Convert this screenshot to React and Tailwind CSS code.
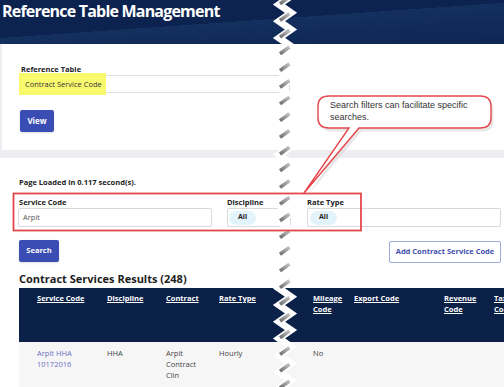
import React from 'react';

const P = 16.7;
const teeth = Array.from({ length: 26 }, (_, i) => 0.3 + (i - 1) * P);

function Tear() {
  const pts = [];
  teeth.forEach((c) => {
    pts.push(`291,${(c - 4.2).toFixed(1)}`);
    pts.push(`279,${(c + 4.2).toFixed(1)}`);
  });
  return (
    <>
      <polyline points={pts.join(' ')} fill="none" stroke="#ffffff" strokeWidth="7" strokeLinejoin="miter" />
      {teeth.map((c, i) => (
        <line key={i} x1="280" y1={c + 3.4} x2="289.5" y2={c - 3.4} stroke="url(#dash)" strokeWidth="3.6" />
      ))}
    </>
  );
}

export default function App() {
  return (
    <div className="relative w-[504px] h-[387px] overflow-hidden bg-white font-['Open_Sans',sans-serif] text-[#222]">
      {/* Header */}
      <header className="h-[44px] bg-[linear-gradient(176deg,#0c2350_48%,#14305e_48%,#0d2552_100%)] pl-[2px]">
        <h1 className="text-[16px] font-bold tracking-[-0.8px] text-white leading-[22px]">Reference Table Management</h1>
      </header>

      {/* Reference table card */}
      <div className="bg-[#eeeef2] pl-[2px] pb-[8px]">
        <div className="h-[106px] bg-white pl-[18px] pt-[20px]">
          <p className="pl-[1px] text-[7.5px] font-bold leading-[10px]">Reference Table</p>
          <div className="relative mt-[1px] h-[18px] w-[270px] rounded-[2px] border border-[#dddddd]">
            <div className="absolute -left-[2px] -top-[3px] h-[22px] w-[87px] bg-[#f8f85e]/90"></div>
            <span className="relative block pl-[4px] text-[7.5px] leading-[16px] text-[#333]">Contract Service Code</span>
          </div>
          <button className="mt-[17px] h-[22px] w-[34px] rounded-[2px] bg-[#3a4db5] text-[8px] font-bold text-white shadow-sm">
            View
          </button>
        </div>
      </div>

      {/* Search section */}
      <section className="pl-[18px] pt-[19px]">
        <p className="pl-[1px] text-[7.5px] font-bold leading-[10px]">Page Loaded in 0.117 second(s).</p>

        <div className="mt-[10px] flex items-start">
          <div className="w-[194px]">
            <p className="pl-[1px] text-[7.5px] font-bold leading-[10px]">Service Code</p>
            <div className="mt-[1px] h-[19px] rounded-[2px] border border-[#d9d9d9] pl-[4px] text-[7.5px] leading-[17px] text-[#555]">
              Arpit
            </div>
          </div>
          <div className="ml-[15px] w-[64px]">
            <p className="text-[7.5px] font-bold leading-[10px]">Discipline</p>
            <div className="mt-[1px] flex h-[19px] items-center rounded-[2px] border border-[#d9d9d9] pl-[1px]">
              <span className="flex h-[14px] w-[27px] items-center justify-center rounded-full bg-[#e2f3fb] text-[7px] font-bold">All</span>
            </div>
          </div>
          <div className="ml-[16px] w-[194px]">
            <p className="text-[7.5px] font-bold leading-[10px]">Rate Type</p>
            <div className="mt-[1px] flex h-[19px] items-center rounded-[2px] border border-[#d9d9d9] pl-[2px]">
              <span className="flex h-[14px] w-[27px] items-center justify-center rounded-full bg-[#e2f3fb] text-[7px] font-bold">All</span>
            </div>
          </div>
        </div>

        <div className="mt-[13px] flex w-[483px] items-start justify-between">
          <button className="ml-[1px] h-[22px] w-[40px] rounded-[2px] bg-[#3a4db5] text-[7.5px] font-bold text-white shadow-sm">
            Search
          </button>
          <button className="mt-[1px] h-[22px] w-[112px] rounded-[2px] border border-[#9ea7da] bg-white text-[7.5px] font-bold text-[#3f4fae]">
            Add Contract Service Code
          </button>
        </div>

        <h2 className="mt-[8px] pl-[1px] text-[11px] font-bold leading-[15px] text-[#1d1d1d]">Contract Services Results (248)</h2>
      </section>

      {/* Table */}
      <div className="ml-[19px] mt-[2px] w-[560px]">
        <div className="grid h-[54px] grid-cols-[70px_59px_53px_59px_35px_41px_90px_50px_60px] bg-[#0b2147] pl-[18px] pt-[5px] text-[7.5px] font-bold leading-[11px] text-white">
          <span className="underline">Service Code</span>
          <span className="underline">Discipline</span>
          <span className="underline">Contract</span>
          <span className="underline">Rate Type</span>
          <span></span>
          <span className="underline">Mileage<br />Code</span>
          <span className="underline">Export Code</span>
          <span className="underline">Revenue<br />Code</span>
          <span className="underline">Tax<br />Code</span>
        </div>
        <div className="grid h-[50px] grid-cols-[70px_59px_53px_59px_35px_41px_90px_50px_60px] bg-[#f6f6f6] pl-[18px] pt-[6px] text-[7.5px] leading-[11px] text-[#444]">
          <span className="text-[#6b6fc4]">Arpit HHA<br />10172016</span>
          <span>HHA</span>
          <span>Arpit<br />Contract<br />Clin</span>
          <span>Hourly</span>
          <span></span>
          <span>No</span>
          <span></span>
          <span></span>
          <span></span>
        </div>
      </div>

      {/* Annotations: torn edge, highlight box, callout */}
      <svg className="pointer-events-none absolute left-0 top-0" width="504" height="387">
        <defs>
          <linearGradient id="dash" x1="0" y1="1" x2="1" y2="0">
            <stop offset="0" stopColor="#6f6f6f" />
            <stop offset="1" stopColor="#c4c4c4" />
          </linearGradient>
        </defs>
        <Tear />
        <rect x="13.5" y="193.5" width="347.5" height="37" fill="none" stroke="#e3464b" strokeWidth="1.8" />
        <path
          d="M 330 98 H 481 Q 492 98 492 108 V 119 Q 492 130 481 130 H 360 L 306 194 L 350 130 H 330 Q 319 130 319 119 V 108 Q 319 98 330 98 Z"
          fill="#d8d8d8"
          opacity="0.6"
          transform="translate(1.5 1.5)"
        />
        <path
          d="M 329 96 H 480 Q 491 96 491 106 V 118 Q 491 128 480 128 H 359 L 304 193 L 349 128 H 329 Q 318 128 318 118 V 106 Q 318 96 329 96 Z"
          fill="#ffffff"
          stroke="#e3464b"
          strokeWidth="1.4"
        />
      </svg>
      <div className="pointer-events-none absolute left-[330px] top-[100px] font-['Liberation_Sans',Arial,sans-serif] text-[9px] leading-[11.5px] text-[#333]">
        Search filters can facilitate specific
        <br />
        searches.
      </div>
    </div>
  );
}
